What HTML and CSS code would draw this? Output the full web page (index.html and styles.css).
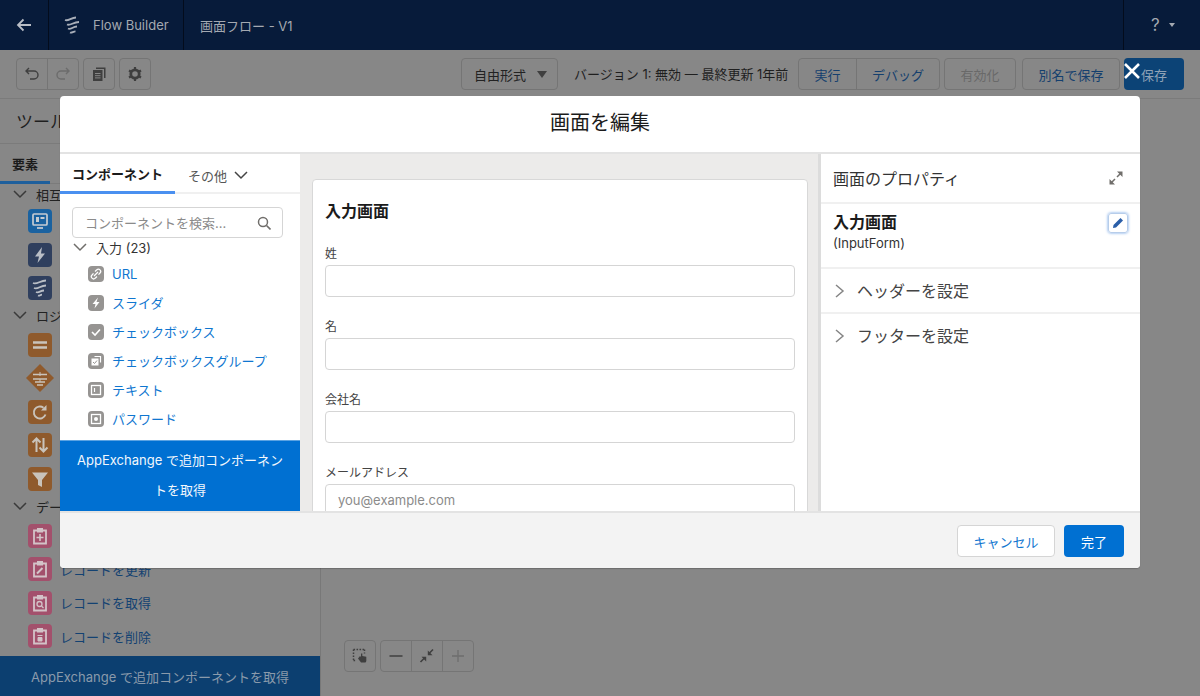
FILE: index.html
```html
<!DOCTYPE html>
<html lang="ja">
<head>
<meta charset="utf-8">
<title>Flow Builder</title>
<link rel="stylesheet" href="styles.css">
</head>
<body>
<div class="app">
  <header class="topbar">
    <div class="top-cell back"><svg class="ic18" viewBox="0 0 18 18"><path d="M16 9H3M8.500 3.500 3 9l5.500 5.500" fill="none" stroke="#b9bec6" stroke-width="1.800"/></svg></div>
    <div class="top-cell brand">
      <svg class="ic18" viewBox="0 0 18 18"><path d="M1 4c3.500 1.500 6-2.500 11-2.500M3 8.500c3.500 1.500 6-2.500 12-2.500M4 12.500c3 1.500 4.500-2 9-2M6 16.500c2 .8 3-1.200 5.500-1.200" fill="none" stroke="#a9afb9" stroke-width="1.800"/></svg>
      <span>Flow Builder</span>
    </div>
    <div class="top-title">画面フロー - V1</div>
    <div class="top-help"><span class="q">?</span><span class="tri"></span></div>
  </header>
  <div class="toolbar">
    <div class="btn-group">
      <span class="tbtn"><svg class="ic16" viewBox="0 0 16 16"><path d="M5 2 2 5l3 3M2.500 5H10a3.500 3.500 0 0 1 0 8H6" fill="none" stroke="#3f3f3f" stroke-width="1.400"/></svg></span>
      <span class="tbtn"><svg class="ic16" viewBox="0 0 16 16"><path d="m11 2 3 3-3 3M13.500 5H6a3.500 3.500 0 0 0 0 8h4" fill="none" stroke="#6c6c6c" stroke-width="1.400"/></svg></span>
    </div>
    <div class="btn-group"><span class="tbtn"><svg class="ic16" viewBox="0 0 16 16"><path d="M5 1.500h9.500v10.500h-1.500V3H5z" fill="#3f3f3f"/><path d="M2 4h9.500v11H2z" fill="#3f3f3f"/><path d="M4 7.500h5.500M4 9.700h5.500M4 11.900h5.500" stroke="#878787"/></svg></span></div>
    <div class="btn-group"><span class="tbtn"><svg class="ic16" viewBox="0 0 16 16"><circle cx="8" cy="8" r="4.200" fill="none" stroke="#3f3f3f" stroke-width="2.800"/><path d="M8 1v2.500M8 12.500V15M2 4.500l2.200 1.300M11.800 10.200 14 11.500M2 11.500l2.200-1.300M11.800 5.800 14 4.500" stroke="#3f3f3f" stroke-width="2.200"/></svg></span></div>
    <div class="spacer"></div>
    <div class="select-mode"><span>自由形式</span><span class="sel-tri"></span></div>
    <div class="version">バージョン 1: 無効 — 最終更新 1年前</div>
    <div class="btn-group tgroup"><span class="tx w-run">実行</span><span class="tx w-debug">デバッグ</span></div>
    <div class="btn-group tgroup"><span class="tx w-act off">有効化</span></div>
    <div class="btn-group tgroup saveas"><span class="tx w-saveas">別名で保存</span></div>
    <div class="save-btn">保存</div>
  </div>
  <div class="workspace">
    <aside class="palette">
      <div class="pal-title">ツールボックス</div>
      <div class="pal-tabs"><span class="pal-tab">要素</span></div>
      <div class="pal-list">
        <div class="pal-head"><svg class="chev" viewBox="0 0 14 14"><path d="m1 4 6 6 6-6" fill="none" stroke="#3a3a3a" stroke-width="1.500"/></svg><span>相互作用</span></div>
        <div class="pal-row"><span class="pi blue"><svg viewBox="0 0 24 24"><rect x="5" y="5" width="14" height="11" rx="1" fill="none" stroke="#c6ccd2" stroke-width="1.700"/><rect x="8" y="8" width="3" height="5" fill="#c6ccd2"/><rect x="12.500" y="8" width="4" height="2" fill="#c6ccd2"/><path d="M9 19h6" stroke="#c6ccd2" stroke-width="1.700"/></svg></span></div>
        <div class="pal-row"><span class="pi navy"><svg viewBox="0 0 24 24"><path d="M14 4 7 13.500h4L9.500 20 17 10.500h-4z" fill="#b9bec6"/></svg></span></div>
        <div class="pal-row"><span class="pi navy"><svg viewBox="0 0 24 24"><path d="M5 7c4 1.800 7-2.500 13-2.500M6 12c4 1.800 6-2.500 12-2.500M8 16c3 1.500 4-1.500 8-1.500M10 19.500c2 .8 2-.8 4-.8" fill="none" stroke="#b9bec6" stroke-width="1.800"/></svg></span></div>
        <div class="pal-head"><svg class="chev" viewBox="0 0 14 14"><path d="m1 4 6 6 6-6" fill="none" stroke="#3a3a3a" stroke-width="1.500"/></svg><span>ロジック</span></div>
        <div class="pal-row"><span class="pi orange"><svg viewBox="0 0 24 24"><path d="M5 9.500h14M5 14.500h14" stroke="#c9c3bb" stroke-width="2.400"/></svg></span></div>
        <div class="pal-row"><span class="pi diamond"><svg viewBox="0 0 28 28"><path d="M14 0 28 14 14 28 0 14z" fill="#8f5a2c"/><path d="M7 10.500h14M7 15h14M9 18h10M11 21h6" stroke="#c9c3bb" stroke-width="1.300"/><path d="M14 8v4M14 15v3" stroke="#c9c3bb"/></svg></span></div>
        <div class="pal-row"><span class="pi orange"><svg viewBox="0 0 24 24"><path d="M17.500 14.500a6 6 0 1 1-2-6.800" fill="none" stroke="#c9c3bb" stroke-width="1.900"/><path d="M18.500 5v5.500H13z" fill="#c9c3bb"/></svg></span></div>
        <div class="pal-row"><span class="pi orange"><svg viewBox="0 0 24 24"><path d="M8.500 19V6M4.500 9.500l4-4 4 4M15.500 5v13M11.500 14.500l4 4 4-4" fill="none" stroke="#c9c3bb" stroke-width="2"/></svg></span></div>
        <div class="pal-row"><span class="pi orange"><svg viewBox="0 0 24 24"><path d="M4 5.500h16L14 13v7l-4-2v-5z" fill="#c9c3bb"/></svg></span></div>
        <div class="pal-head"><svg class="chev" viewBox="0 0 14 14"><path d="m1 4 6 6 6-6" fill="none" stroke="#3a3a3a" stroke-width="1.500"/></svg><span>データ</span></div>
        <div class="pal-row"><span class="pi pink"><svg viewBox="0 0 24 24"><path d="M6 6.500h12v13H6z" fill="none" stroke="#d3c3c8" stroke-width="1.800"/><path d="M9 4h6v4.500H9z" fill="#d3c3c8"/><path d="M12 10v7M8.500 13.500h7" stroke="#d3c3c8" stroke-width="1.600"/></svg></span></div>
        <div class="pal-row"><span class="pi pink"><svg viewBox="0 0 24 24"><path d="M6 6.500h12v13H6z" fill="none" stroke="#d3c3c8" stroke-width="1.800"/><path d="M9 4h6v4.500H9z" fill="#d3c3c8"/><path d="m9 16.500 5.500-5.500" stroke="#d3c3c8" stroke-width="2"/></svg></span><a>レコードを更新</a></div>
        <div class="pal-row"><span class="pi pink"><svg viewBox="0 0 24 24"><path d="M6 6.500h12v13H6z" fill="none" stroke="#d3c3c8" stroke-width="1.800"/><path d="M9 4h6v4.500H9z" fill="#d3c3c8"/><circle cx="11.500" cy="13" r="2.500" fill="none" stroke="#d3c3c8" stroke-width="1.300"/><path d="m13.500 15 2 2" stroke="#d3c3c8" stroke-width="1.300"/></svg></span><a>レコードを取得</a></div>
        <div class="pal-row"><span class="pi pink"><svg viewBox="0 0 24 24"><path d="M6 6.500h12v13H6z" fill="none" stroke="#d3c3c8" stroke-width="1.800"/><path d="M9 4h6v4.500H9z" fill="#d3c3c8"/><path d="M9.500 11.500h5M10 13.500h4v3.500h-4z" fill="#d3c3c8" stroke="#d3c3c8"/></svg></span><a>レコードを削除</a></div>
      </div>
      <div class="pal-cta">AppExchange で追加コンポーネントを取得</div>
    </aside>
    <main class="canvas">
      <div class="zoom-tools">
        <span class="btn-group"><span class="zbtn"><svg class="ic16" viewBox="0 0 16 16"><path d="M1.500 1.500h11M1.500 1.500v11" stroke="#3f3f3f" stroke-width="1.500" stroke-dasharray="1.600 1.400" fill="none"/><path d="M12.500 1.500v4M1.500 12.500h3" stroke="#3f3f3f" stroke-width="1.500" stroke-dasharray="1.600 1.400"/><path d="M6 10.500 8 8l1 1V5.500h1.300V8l4 .8V13a1.500 1.500 0 0 1-1.500 1.500H9z" fill="#3f3f3f"/></svg></span></span>
        <span class="btn-group">
          <span class="zbtn"><svg class="ic16" viewBox="0 0 16 16"><path d="M1.500 8h13" stroke="#3f3f3f" stroke-width="1.500"/></svg></span>
          <span class="zbtn"><svg class="ic16" viewBox="0 0 16 16"><path d="M14 1.500 10 5.500M1.500 14l4.500-4.500" stroke="#3f3f3f" stroke-width="1.600"/><path d="M8.800 2.500v4.700h4.700zM2.500 8.800h4.700v4.700z" fill="#3f3f3f"/></svg></span>
          <span class="zbtn"><svg class="ic16" viewBox="0 0 16 16"><path d="M2 8h12M8 2v12" stroke="#6e6e6e" stroke-width="1.300"/></svg></span>
        </span>
      </div>
    </main>
  </div>
</div>

<section class="modal">
  <h2 class="modal-head">画面を編集</h2>
  <div class="modal-body">
    <div class="lib">
      <div class="lib-tabs">
        <span class="lib-tab on">コンポーネント</span>
        <span class="lib-tab">その他 <svg class="chev chev-more" viewBox="0 0 14 14"><path d="m1 4 6 6 6-6" fill="none" stroke="#444" stroke-width="1.500"/></svg></span>
      </div>
      <div class="lib-search"><span>コンポーネントを検索...</span><svg class="ic14" viewBox="0 0 14 14"><circle cx="6" cy="6" r="4.500" fill="none" stroke="#706e6b" stroke-width="1.500"/><path d="m9.500 9.500 4 4" stroke="#706e6b" stroke-width="1.600"/></svg></div>
      <div class="lib-head"><svg class="chev" viewBox="0 0 14 14"><path d="m1 4 6 6 6-6" fill="none" stroke="#706e6b" stroke-width="1.500"/></svg><span>入力 (23)</span></div>
      <ul class="lib-list">
        <li><span class="ci"><svg viewBox="0 0 16 16"><path d="M7 5.500 8.800 3.800a2.200 2.200 0 0 1 3.200 3.200L10.500 8.700M9 10.500l-1.800 1.700A2.200 2.200 0 0 1 4 9L5.500 7.300M6 10l4-4" fill="none" stroke="#fff" stroke-width="1.200"/></svg></span>URL</li>
        <li><span class="ci"><svg viewBox="0 0 16 16"><path d="M10 2.500 4.500 9h3L6.500 13.500 11.500 7H8.500z" fill="#fff"/></svg></span>スライダ</li>
        <li><span class="ci"><svg viewBox="0 0 16 16"><path d="m4 8 3 3 5-5.500" fill="none" stroke="#fff" stroke-width="1.600"/></svg></span>チェックボックス</li>
        <li><span class="ci"><svg viewBox="0 0 16 16"><path d="M6.500 3.500h6v6" fill="none" stroke="#fff" stroke-width="1.200"/><rect x="3.500" y="5.500" width="7" height="7" fill="#fff"/><path d="m5 9 1.500 1.500L9 7.500" fill="none" stroke="#969492"/></svg></span>チェックボックスグループ</li>
        <li><span class="ci"><svg viewBox="0 0 16 16"><rect x="3.500" y="3.500" width="9" height="9" fill="none" stroke="#fff" stroke-width="1.300"/><path d="M6.500 6v4" stroke="#fff" stroke-width="1.200"/></svg></span>テキスト</li>
        <li><span class="ci"><svg viewBox="0 0 16 16"><rect x="3.500" y="3.500" width="9" height="9" fill="none" stroke="#fff" stroke-width="1.300"/><circle cx="8" cy="8" r="2" fill="#fff"/></svg></span>パスワード</li>
      </ul>
      <div class="lib-cta">AppExchange で追加コンポーネントを取得</div>
    </div>
    <div class="stage">
      <div class="card">
        <h3 class="card-title">入力画面</h3>
        <div class="field"><label>姓</label><div class="input"></div></div>
        <div class="field"><label>名</label><div class="input"></div></div>
        <div class="field"><label>会社名</label><div class="input"></div></div>
        <div class="field"><label>メールアドレス</label><div class="input ph">you@example.com</div></div>
      </div>
    </div>
    <div class="props">
      <div class="props-head"><span>画面のプロパティ</span><svg class="ic14" viewBox="0 0 14 14"><path d="M8 6 11.500 2.500M2.500 11.500 6 8" stroke="#706e6b" stroke-width="1.500"/><path d="M8 .5h5.500V6zM.5 8v5.500H6z" fill="#706e6b"/></svg></div>
      <div class="props-name">
        <div><div class="pn-title">入力画面</div><div class="pn-api">(InputForm)</div></div>
        <span class="edit-btn"><svg viewBox="0 0 12 12"><path d="M8.500 1 11 3.500 4 10.500 1 11l.5-3z" fill="#2a5ea8"/></svg></span>
      </div>
      <div class="props-row"><svg class="chev-r" viewBox="0 0 14 14"><path d="m3 1 7 6-7 6" fill="none" stroke="#858585" stroke-width="1.500"/></svg><span>ヘッダーを設定</span></div>
      <div class="props-row"><svg class="chev-r" viewBox="0 0 14 14"><path d="m3 1 7 6-7 6" fill="none" stroke="#858585" stroke-width="1.500"/></svg><span>フッターを設定</span></div>
    </div>
  </div>
  <footer class="modal-foot">
    <span class="btn-neutral">キャンセル</span>
    <span class="btn-brand">完了</span>
  </footer>
</section>
<svg class="close-x" viewBox="0 0 20 20"><path d="m3 3 14 14M17 3 3 17" stroke="#fff" stroke-width="2.600"/></svg>
</body>
</html>
```
FILE: styles.css
```css
* { box-sizing: border-box; }
html, body { margin: 0; height: 100%; }
body {
  width: 1200px; height: 696px; overflow: hidden; position: relative;
  font-family: Inter, "Noto Sans CJK JP", sans-serif;
  font-size: 13px; color: #2b2826; background: #878787;
}
svg { display: block; flex: none; }
.ic18 { width: 18px; height: 18px; }
.ic16 { width: 16px; height: 16px; }
.ic14 { width: 14px; height: 14px; }
.app { height: 696px; display: flex; flex-direction: column; }

.topbar { height: 50px; flex: none; background: #071b3a; display: flex; color: #a4a9b1; }
.top-cell { display: flex; align-items: center; border-right: 1px solid #030c1c; }
.back { width: 49px; padding-left: 15px; }
.brand { width: 135px; padding-left: 15px; gap: 11px; font-size: 13px; }
.top-title { padding-left: 16px; display: flex; align-items: center; flex: 1; }
.top-help { width: 77px; border-left: 1px solid #030c1c; display: flex; align-items: center; padding-left: 27px; gap: 9px; }
.q { font-size: 17px; color: #a4a9b1; }
.tri { width: 0; height: 0; border: 3px solid transparent; border-top: 4px solid #a4a9b1; border-bottom: 0; }

.toolbar { height: 49px; flex: none; display: flex; align-items: flex-start; padding: 8px 16px 0; gap: 4px; border-bottom: 1px solid #7b7b7b; }
.spacer { flex: 1; }
.btn-group { display: inline-flex; height: 32px; border: 1px solid #757575; border-radius: 4px; }
.tbtn { width: 30px; display: flex; align-items: center; justify-content: center; }
.tbtn + .tbtn { border-left: 1px solid #757575; width: 31px; }
.select-mode { width: 97px; height: 32px; border: 1px solid #757575; border-radius: 4px; display: flex; align-items: center; justify-content: space-between; padding: 0 10px 0 12px; color: #222; font-size: 13px; }
.sel-tri { width: 0; height: 0; border: 5px solid transparent; border-top: 7px solid #3f3f3f; border-bottom: 0; }
.version { width: 220px; margin-left: 12px; height: 32px; line-height: 32px; color: #1f1f1f; font-size: 13px; white-space: nowrap; }
.tgroup { color: #143f6e; font-size: 13px; }
.saveas { margin-left: 2px; }
.tx { display: flex; align-items: center; justify-content: center; font-size: 13px; }
.tx + .tx { border-left: 1px solid #757575; }
.w-run { width: 57px; }
.w-debug { width: 83px; }
.w-act { width: 70px; }
.w-saveas { width: 96px; }
.off { color: #696969; }
.save-btn { width: 60px; height: 32px; border-radius: 4px; background: #0c4376; color: #8fa2b6; display: flex; align-items: center; justify-content: center; font-size: 13px; }

.workspace { flex: 1; display: flex; min-height: 0; }
.palette { width: 321px; flex: none; display: flex; flex-direction: column; border-right: 1px solid #787878; }
.pal-title { height: 45px; flex: none; padding-left: 16px; font-size: 17px; line-height: 46px; color: #1f1f1f; border-bottom: 1px solid #7b7b7b; white-space: nowrap; }
.pal-tabs { height: 40px; flex: none; display: flex; border-bottom: 1px solid #7b7b7b; }
.pal-tab { width: 50px; border-bottom: 3px solid #1e5f9c; padding-left: 12px; line-height: 41px; height: 40px; font-size: 13px; font-weight: 700; color: #1b1b1b; }
.pal-list { flex: 1; min-height: 0; overflow: hidden; margin-top: -3px; }
.pal-head { height: 23.25px; padding: 0 0 2px 13px; display: flex; align-items: center; gap: 9px; color: #222; white-space: nowrap; }
.pal-head:first-child { padding-top: 3px; padding-bottom: 0; }
.pal-row { height: 33.5px; padding-left: 28px; display: flex; align-items: center; gap: 8px; }
.pal-row a { color: #134272; white-space: nowrap; }
.chev { width: 14px; height: 14px; }
.pi { width: 24px; height: 24px; border-radius: 4px; flex: none; display: block; }
.pi svg { width: 24px; height: 24px; }
.pi.blue { background: #1a62a0; }
.pi.navy { background: #2f3f5e; }
.pi.orange { background: #8f5a2c; }
.pi.pink { background: #a3506c; }
.pi.diamond { background: none; margin-left: -2px; width: 28px; height: 28px; margin-right: -2px; }
.pi.diamond svg { width: 28px; height: 28px; }
.pal-cta { height: 40px; flex: none; background: #0c3f70; color: #8a9aab; display: flex; align-items: center; justify-content: center; }

.canvas { flex: 1; display: flex; align-items: flex-end; padding: 0 0 24px 23px; }
.zoom-tools { display: flex; gap: 4px; }
.zbtn { width: 30px; display: flex; align-items: center; justify-content: center; }
.zbtn + .zbtn { border-left: 1px solid #757575; width: 31px; }

.modal { position: absolute; left: 60px; top: 96px; width: 1080px; height: 472px; background: #fff; border-radius: 4px; display: flex; flex-direction: column; overflow: hidden; box-shadow: 0 1px 1px rgba(0,0,0,.2); }
.modal-head { margin: 0; height: 58px; flex: none; border-bottom: 2px solid #e3e3e3; text-align: center; font-size: 20px; font-weight: 400; line-height: 54px; color: #1b1b1b; }
.modal-body { height: 357px; flex: none; display: flex; overflow: hidden; }

.lib { width: 240px; flex: none; display: flex; flex-direction: column; background: #fff; }
.lib-tabs { height: 40px; flex: none; display: flex; border-bottom: 2px solid #f0f0f0; }
.lib-tab { width: 115px; height: 40px; flex: none; padding: 2px 0 0 12px; display: flex; align-items: center; gap: 7px; color: #555; }
.lib-tab.on { color: #1b1b1b; font-weight: 700; border-bottom: 3px solid #4a90f0; }
.lib-tab + .lib-tab { padding-left: 13px; }
.lib-search { margin: 13px 17px 0 12px; height: 31px; flex: none; border: 1px solid #d5d5d5; border-radius: 4px; display: flex; align-items: center; justify-content: space-between; padding: 0 11px 0 12px; color: #8b8b8b; }
.lib-head { height: 18px; flex: none; padding-left: 13px; display: flex; align-items: center; gap: 9px; color: #333; }
.lib-list { list-style: none; margin: 3px 0 0; padding: 0 0 0 28px; flex: 1; min-height: 0; overflow: hidden; }
.lib-list li { height: 29px; display: flex; align-items: center; gap: 8px; color: #0f76d0; }
.ci { width: 16px; height: 16px; border-radius: 4px; background: #969492; flex: none; }
.ci svg { width: 16px; height: 16px; }
.lib-cta { height: 71px; flex: none; background: #0070d2; color: #f2f7fc; text-align: center; line-height: 30px; padding: 4px 15px; border-top: 1px solid #5ca3e2; }

.stage { width: 518px; flex: none; background: #ecebea; padding: 25px 10px 0 12px; overflow: hidden; }
.card { background: #fff; border: 1px solid #d8d8d8; border-radius: 4px; padding: 0 12px; height: 400px; }
.card-title { margin: 0; font-size: 16px; font-weight: 700; height: 64px; line-height: 63px; color: #1b1b1b; }
.field { height: 73px; }
.field label { display: block; font-size: 12px; line-height: 20px; height: 21px; color: #444; }
.input { height: 32px; border: 1px solid #d5d5d5; border-radius: 4px; }
.input.ph { padding-left: 12px; line-height: 30px; color: #8b8b8b; }

.props { flex: 1; border-left: 3px solid #dcdcdc; }
.props-head { height: 50px; padding: 0 17px 1px 12px; display: flex; align-items: center; justify-content: space-between; font-size: 16px; color: #333; border-bottom: 2px solid #f0f0f0; }
.props-name { height: 65px; padding: 7px 12px 0 12px; display: flex; justify-content: space-between; align-items: flex-start; border-bottom: 2px solid #f0f0f0; }
.pn-title { font-size: 16px; font-weight: 700; color: #1b1b1b; line-height: 22px; }
.pn-api { font-size: 13px; color: #333; line-height: 20px; }
.edit-btn { width: 20px; height: 20px; margin-top: 2px; border: 1px solid #b7cdea; border-radius: 3px; box-shadow: 0 0 3px #6a9fe4; display: flex; align-items: center; justify-content: center; }
.edit-btn svg { width: 12px; height: 12px; }
.props-row { height: 45px; padding: 0 0 1px 12px; display: flex; align-items: center; gap: 10px; font-size: 16px; color: #444; border-bottom: 2px solid #f0f0f0; }
.props-row:last-child { border-bottom-color: transparent; }
.chev-r { width: 14px; height: 14px; margin-top: 2px; }

.modal-foot { flex: 1; background: #f3f3f3; border-top: 2px solid #e3e3e3; display: flex; justify-content: flex-end; align-items: flex-start; gap: 9px; padding: 12px 16px 0 0; }
.btn-neutral, .btn-brand { height: 32px; border-radius: 4px; display: flex; align-items: center; justify-content: center; }
.btn-neutral { width: 98px; background: #fff; border: 1px solid #d5d5d5; color: #0f76d0; }
.btn-brand { width: 60px; background: #0070d2; color: #fff; }

.close-x { position: absolute; left: 1122px; top: 61px; width: 20px; height: 20px; }
```
